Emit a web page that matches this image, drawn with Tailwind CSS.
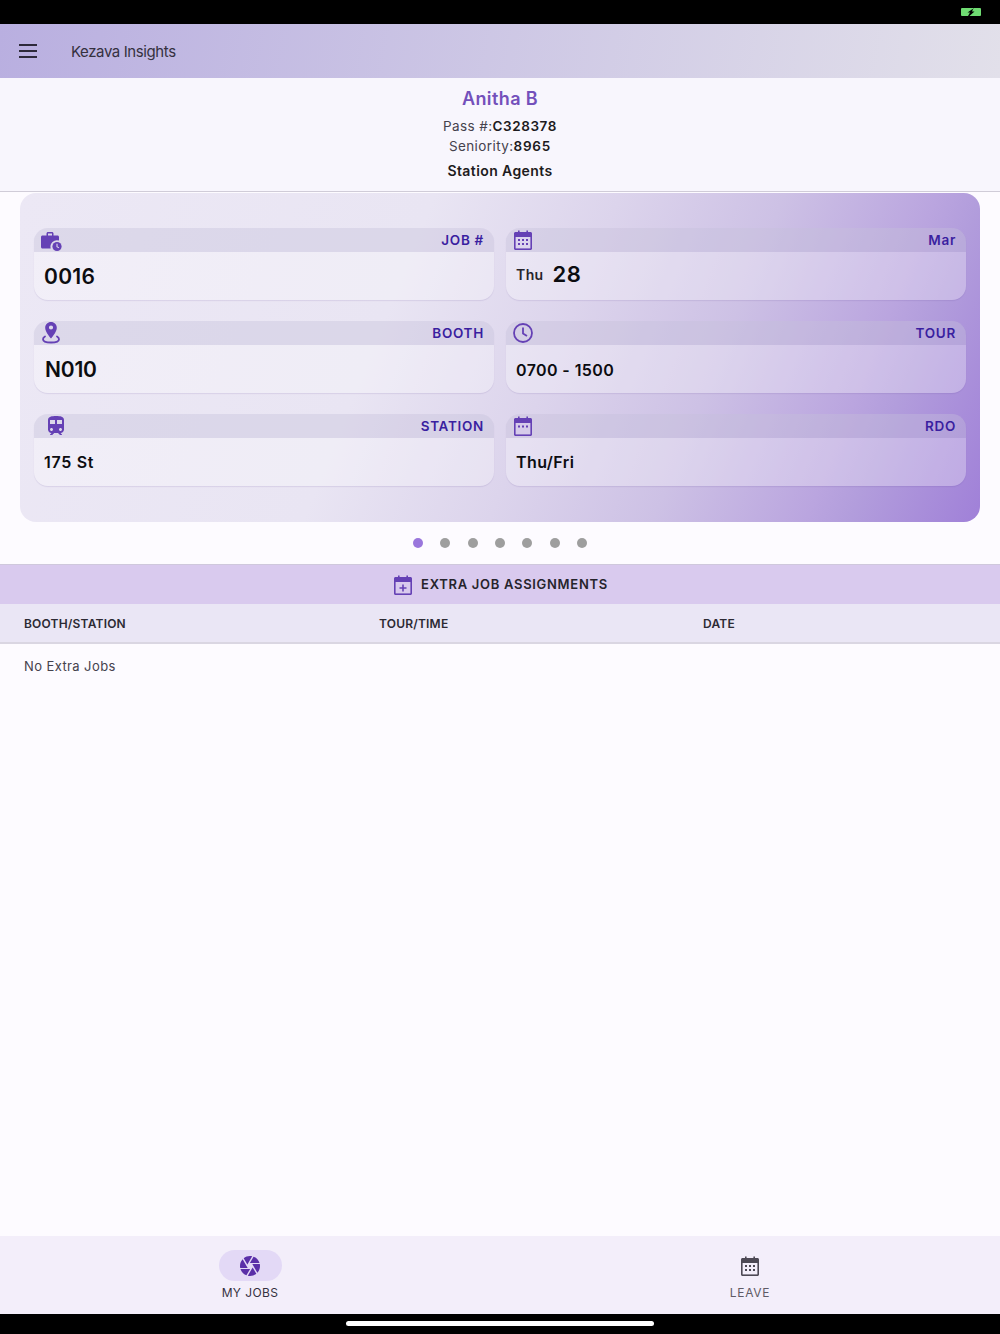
<!DOCTYPE html>
<html lang="en">
<head>
    <meta charset="UTF-8">
    <meta name="viewport" content="width=device-width, initial-scale=1.0">
    <title>Kezava Insights</title>
    <script src="https://cdn.jsdelivr.net/npm/@tailwindcss/browser@4"></script>
</head>
<body class="font-['Inter',sans-serif] bg-[#fdfbff] text-[#1d1b20]">
    <div class="w-[1000px] h-[1334px] flex flex-col overflow-hidden">
        <!-- Status bar -->
        <div class="h-[24px] bg-black flex justify-end items-center pr-[19px]">
            <svg class="w-[20px] h-[8px]" viewBox="0 0 20 8" aria-hidden="true">
                <rect width="20" height="8" rx="1" fill="#6fdc72"/>
                <path d="M13 0 L6.500 4.600 H9 L7 8 H8.500 L13.500 3.400 H11 L12.500 0 Z" fill="#000"/>
            </svg>
        </div>

        <!-- App bar -->
        <header class="h-[54px] flex items-center bg-[linear-gradient(100deg,#b9afe0_0%,#e2e0ea_100%)]">
            <svg class="w-[18px] h-[14px] ml-[19px]" viewBox="0 0 18 14" fill="#2e2a3a" aria-hidden="true">
                <rect y="0" width="18" height="2"/><rect y="6" width="18" height="2"/><rect y="12" width="18" height="2"/>
            </svg>
            <span class="ml-[34px] pt-[2px] text-[15px] text-[#35313f] tracking-[-0.4px]">Kezava Insights</span>
        </header>

        <!-- Profile -->
        <section class="h-[114px] bg-[#f8f6fd] border-b border-[#d0ccd8] flex flex-col items-center">
            <h1 class="mt-[9px] h-[24px] leading-[24px] text-[18px] font-semibold text-[#7350bb] tracking-[0.4px]">Anitha B</h1>
            <p class="mt-[5px] h-[20px] leading-[20px] text-[13.5px] text-[#45424d] tracking-[0.4px]">Pass #:<span class="font-semibold text-[#1d1b20] tracking-[0.6px]">C328378</span></p>
            <p class="h-[20px] leading-[20px] text-[13.5px] text-[#45424d] tracking-[0.4px]">Seniority:<span class="font-semibold text-[#1d1b20] tracking-[0.8px]">8965</span></p>
            <p class="mt-[5px] h-[20px] leading-[20px] text-[14px] font-semibold text-[#1d1b20] tracking-[0.4px]">Station Agents</p>
        </section>

        <!-- Job card -->
        <section class="mx-[20px] mt-[1px] h-[329px] rounded-[16px] px-[14px] pt-[35px] bg-[linear-gradient(112deg,#ece8f5_0%,#e9e5f3_38%,#dcd4ec_55%,#cdc1e5_70%,#baa5df_84%,#b29ddc_88%,#a080d8_100%)]">
            <div class="grid grid-cols-2 gap-x-[12px] gap-y-[21px]">
                <!-- Job -->
                <article class="h-[72px] rounded-[14px] overflow-hidden bg-white/30 shadow-[0_1px_1px_rgba(80,60,140,0.12)]">
                    <div class="h-[24px] flex items-center justify-between bg-[#4b3a8c]/12 pl-[5px] pr-[10px]">
                        <svg class="w-[24px] h-[24px]" viewBox="0 0 24 24" fill="#6541b5" aria-hidden="true">
                            <path d="M3.500 7.500h4V5.600C7.500 4.700 8.200 4 9.100 4h3.800c.9 0 1.600.7 1.600 1.600v1.900h4c.8 0 1.500.7 1.500 1.500v3.600a6.500 6.500 0 0 0-8.300 7.900H3.500c-.8 0-1.500-.7-1.500-1.500V9c0-.8.7-1.500 1.500-1.500zM9 7.500h4V5.500H9z"/>
                            <circle cx="18" cy="18.500" r="4.600"/>
                            <path d="M18 15.800v2.900l2 1.200" fill="none" stroke="#dcd7ec" stroke-width="1.100"/>
                        </svg>
                        <span class="pt-[1px] text-[13.5px] font-semibold text-[#3a1fa0] tracking-[0.7px]">JOB #</span>
                    </div>
                    <div class="h-[48px] flex items-center pl-[10px] pt-[2px] text-[21px] font-semibold text-[#0c0c10] tracking-[0.3px]">0016</div>
                </article>
                <!-- Date -->
                <article class="h-[72px] rounded-[14px] overflow-hidden bg-white/30 shadow-[0_1px_1px_rgba(80,60,140,0.12)]">
                    <div class="h-[24px] flex items-center justify-between bg-[#4b3a8c]/12 pl-[5px] pr-[10px]">
                        <svg class="w-[24px] h-[24px]" viewBox="0 0 24 24" aria-hidden="true">
                            <path fill="#6541b5" d="M4.500 4H7V2.500h1.600V4h6.800V2.500H17V4h2.500C20.300 4 21 4.700 21 5.500v15c0 .8-.7 1.500-1.500 1.500h-15C3.700 22 3 21.300 3 20.500v-15C3 4.700 3.700 4 4.500 4z"/>
                            <rect x="4.600" y="9" width="14.800" height="11.400" fill="#dcd4ee"/>
                            <g fill="#6541b5"><rect x="7" y="11" width="2" height="2"/><rect x="11" y="11" width="2" height="2"/><rect x="15" y="11" width="2" height="2"/><rect x="7" y="15" width="2" height="2"/><rect x="11" y="15" width="2" height="2"/><rect x="15" y="15" width="2" height="2"/></g>
                        </svg>
                        <span class="pt-[1px] text-[13.5px] font-semibold text-[#3a1fa0] tracking-[0.7px]">Mar</span>
                    </div>
                    <div class="h-[48px] flex items-center pl-[10px] text-[#0c0c10]">
                        <span class="text-[14px] font-semibold tracking-[0.4px] mb-[3px] text-[#26242c]">Thu</span>
                        <span class="ml-[9px] text-[22px] font-semibold tracking-[0.5px] mb-[4px]">28</span>
                    </div>
                </article>
                <!-- Booth -->
                <article class="h-[72px] rounded-[14px] overflow-hidden bg-white/30 shadow-[0_1px_1px_rgba(80,60,140,0.12)]">
                    <div class="h-[24px] flex items-center justify-between bg-[#4b3a8c]/12 pl-[5px] pr-[10px]">
                        <svg class="w-[24px] h-[24px]" viewBox="0 0 24 24" aria-hidden="true">
                            <path fill="#6541b5" d="M12 1c-3.300 0-5.800 2.500-5.800 5.700 0 3.600 3.500 8 5.800 10.800 2.300-2.800 5.800-7.200 5.800-10.800C17.800 3.500 15.300 1 12 1zm0 7.600a2.100 2.100 0 1 1 0-4.200 2.100 2.100 0 0 1 0 4.200z"/>
                            <path fill="none" stroke="#6541b5" stroke-width="1.800" stroke-linecap="round" d="M6 15.500c-1.300.7-2 1.600-2 2.700 0 2 3.500 3.300 8 3.300s8-1.300 8-3.300c0-1.100-.7-2-2-2.700"/>
                        </svg>
                        <span class="pt-[1px] text-[13.5px] font-semibold text-[#3a1fa0] tracking-[0.7px]">BOOTH</span>
                    </div>
                    <div class="h-[48px] flex items-center pl-[11px] pt-[2px] text-[21px] font-semibold text-[#0c0c10] tracking-[-0.2px]">N010</div>
                </article>
                <!-- Tour -->
                <article class="h-[72px] rounded-[14px] overflow-hidden bg-white/30 shadow-[0_1px_1px_rgba(80,60,140,0.12)]">
                    <div class="h-[24px] flex items-center justify-between bg-[#4b3a8c]/12 pl-[5px] pr-[10px]">
                        <svg class="w-[24px] h-[24px]" viewBox="0 0 24 24" fill="none" stroke="#6541b5" aria-hidden="true">
                            <circle cx="12" cy="12" r="9" stroke-width="1.800"/>
                            <path d="M12 6.500V12.500L16 15" stroke-width="1.800"/>
                        </svg>
                        <span class="pt-[1px] text-[13.5px] font-semibold text-[#3a1fa0] tracking-[0.7px]">TOUR</span>
                    </div>
                    <div class="h-[48px] flex items-center pl-[10px] pt-[1px] text-[16px] font-semibold text-[#0c0c10] tracking-[0.4px]">0700 - 1500</div>
                </article>
                <!-- Station -->
                <article class="h-[72px] rounded-[14px] overflow-hidden bg-white/30 shadow-[0_1px_1px_rgba(80,60,140,0.12)]">
                    <div class="h-[24px] flex items-center justify-between bg-[#4b3a8c]/12 pl-[10px] pr-[10px]">
                        <svg class="w-[24px] h-[24px]" viewBox="0 0 24 24" fill="#6541b5" aria-hidden="true">
                            <path d="M12 2c-4 0-8 .5-8 4v9.500C4 17.430 5.570 19 7.500 19L6 20.500v.5h2.230l2-2H14l2 2h2v-.5L16.500 19c1.930 0 3.500-1.570 3.500-3.500V6c0-3.500-3.580-4-8-4zM7.500 17c-.83 0-1.500-.67-1.500-1.500S6.670 14 7.500 14s1.500.67 1.500 1.500S8.330 17 7.500 17zm3.500-7H6V6h5v4zm2 0V6h5v4h-5zm3.500 7c-.83 0-1.500-.67-1.500-1.500s.67-1.500 1.500-1.500 1.500.67 1.500 1.500-.67 1.500-1.500 1.500z"/>
                        </svg>
                        <span class="pt-[1px] text-[13.5px] font-semibold text-[#3a1fa0] tracking-[0.7px]">STATION</span>
                    </div>
                    <div class="h-[48px] flex items-center pl-[10px] text-[16px] font-semibold text-[#0c0c10] tracking-[0.7px]">175 St</div>
                </article>
                <!-- RDO -->
                <article class="h-[72px] rounded-[14px] overflow-hidden bg-white/30 shadow-[0_1px_1px_rgba(80,60,140,0.12)]">
                    <div class="h-[24px] flex items-center justify-between bg-[#4b3a8c]/12 pl-[5px] pr-[10px]">
                        <svg class="w-[24px] h-[24px]" viewBox="0 0 24 24" aria-hidden="true">
                            <path fill="#6541b5" d="M4.500 4H7V2.500h1.600V4h6.800V2.500H17V4h2.500C20.300 4 21 4.700 21 5.500v15c0 .8-.7 1.500-1.500 1.500h-15C3.700 22 3 21.300 3 20.500v-15C3 4.700 3.700 4 4.500 4z"/>
                            <rect x="4.600" y="9" width="14.800" height="11.400" fill="#d6cbea"/>
                            <g fill="#6541b5"><rect x="7" y="11.500" width="2" height="2"/><rect x="11" y="11.500" width="2" height="2"/><rect x="15" y="11.500" width="2" height="2"/></g>
                        </svg>
                        <span class="pt-[1px] text-[13.5px] font-semibold text-[#3a1fa0] tracking-[0.7px]">RDO</span>
                    </div>
                    <div class="h-[48px] flex items-center pl-[10px] text-[16px] font-semibold text-[#0c0c10] tracking-[0.4px]">Thu/Fri</div>
                </article>
            </div>
        </section>

        <!-- Pager dots -->
        <div class="h-[42px] flex items-center justify-center gap-[17.300px]">
            <span class="w-[10px] h-[10px] rounded-full bg-[#9a76dc]"></span>
            <span class="w-[10px] h-[10px] rounded-full bg-[#9e9e9e]"></span>
            <span class="w-[10px] h-[10px] rounded-full bg-[#9e9e9e]"></span>
            <span class="w-[10px] h-[10px] rounded-full bg-[#9e9e9e]"></span>
            <span class="w-[10px] h-[10px] rounded-full bg-[#9e9e9e]"></span>
            <span class="w-[10px] h-[10px] rounded-full bg-[#9e9e9e]"></span>
            <span class="w-[10px] h-[10px] rounded-full bg-[#9e9e9e]"></span>
        </div>

        <!-- Extra jobs -->
        <section class="h-[40px] bg-[#d9caee] border-t border-[#cfc8dc] flex items-center justify-center gap-[6px]">
            <svg class="w-[24px] h-[24px] -ml-[1px]" viewBox="0 0 24 24" aria-hidden="true">
                <path fill="#6541b5" d="M4.500 4H7V2.500h1.600V4h6.800V2.500H17V4h2.500C20.300 4 21 4.700 21 5.500v15c0 .8-.7 1.500-1.500 1.500h-15C3.700 22 3 21.300 3 20.500v-15C3 4.700 3.700 4 4.500 4z"/>
                <rect x="4.600" y="9" width="14.800" height="11.400" fill="#d9caee"/>
                <path fill="#6541b5" d="M11.200 11.500h1.600v2.700h2.700v1.600h-2.700v2.700h-1.600v-2.700H8.500v-1.600h2.700z"/>
            </svg>
            <h2 class="text-[13px] font-semibold text-[#26242c] tracking-[0.7px]">EXTRA JOB ASSIGNMENTS</h2>
        </section>
        <div class="h-[40px] bg-[#eae6f5] border-b-2 border-[#dad6e2] grid grid-cols-[355px_324px_1fr] items-center pl-[24px] pt-[1px] text-[12px] font-semibold text-[#2c2a33] tracking-[0.2px]">
            <span>BOOTH/STATION</span>
            <span>TOUR/TIME</span>
            <span>DATE</span>
        </div>
        <p class="flex-1 pl-[24px] pt-[13px] text-[13px] leading-[18px] text-[#45424d] tracking-[0.4px]">No Extra Jobs</p>

        <!-- Bottom navigation -->
        <nav class="h-[78px] bg-[#f3eefa] grid grid-cols-2">
            <a class="flex flex-col items-center pt-[14px]">
                <span class="w-[63px] h-[31px] rounded-full bg-[#e3d9f6] flex items-center justify-center">
                    <svg class="w-[24px] h-[24px]" viewBox="0 0 24 24" fill="#5a2fa8" aria-hidden="true">
                        <path d="M9.400 10.500l4.770-8.260C13.470 2.090 12.750 2 12 2c-2.400 0-4.600.85-6.320 2.250l3.660 6.350.06-.1zM21.540 9c-.92-2.920-3.150-5.260-6-6.340L11.880 9h9.660zm.26 1h-7.490l.29.5 4.760 8.250C21 16.970 22 14.610 22 12c0-.69-.07-1.350-.2-2zM8.540 12l-3.900-6.750C3.010 7.030 2 9.390 2 12c0 .69.07 1.350.2 2h7.490l-1.150-2zm-6.080 3c.92 2.920 3.150 5.260 6 6.340L12.120 15H2.460zm11.270 0l-3.900 6.760c.7.15 1.420.24 2.170.24 2.400 0 4.600-.85 6.320-2.250l-3.660-6.350-.93 1.600z"/>
                    </svg>
                </span>
                <span class="mt-[4px] text-[12px] leading-[16px] text-[#35313f] tracking-[0.4px]">MY JOBS</span>
            </a>
            <a class="flex flex-col items-center pt-[14px]">
                <span class="w-[63px] h-[31px] flex items-center justify-center">
                    <svg class="w-[24px] h-[24px]" viewBox="0 0 24 24" fill="none" aria-hidden="true">
                        <path fill="#4d4955" d="M4.500 4H7V2.500h1.600V4h6.800V2.500H17V4h2.500C20.300 4 21 4.700 21 5.500v15c0 .8-.7 1.500-1.500 1.500h-15C3.700 22 3 21.300 3 20.500v-15C3 4.700 3.700 4 4.500 4z"/>
                        <rect x="4.600" y="9" width="14.800" height="11.400" fill="#f3eefa"/>
                        <g fill="#4d4955"><rect x="7" y="11" width="2" height="2"/><rect x="11" y="11" width="2" height="2"/><rect x="15" y="11" width="2" height="2"/><rect x="7" y="15" width="2" height="2"/><rect x="11" y="15" width="2" height="2"/><rect x="15" y="15" width="2" height="2"/></g>
                    </svg>
                </span>
                <span class="mt-[4px] text-[12px] leading-[16px] text-[#5f5b66] tracking-[0.7px]">LEAVE</span>
            </a>
        </nav>

        <!-- Home indicator -->
        <div class="h-[20px] bg-black flex justify-center pt-[7px]">
            <span class="w-[308px] h-[5px] rounded-full bg-white"></span>
        </div>
    </div>
</body>
</html>
